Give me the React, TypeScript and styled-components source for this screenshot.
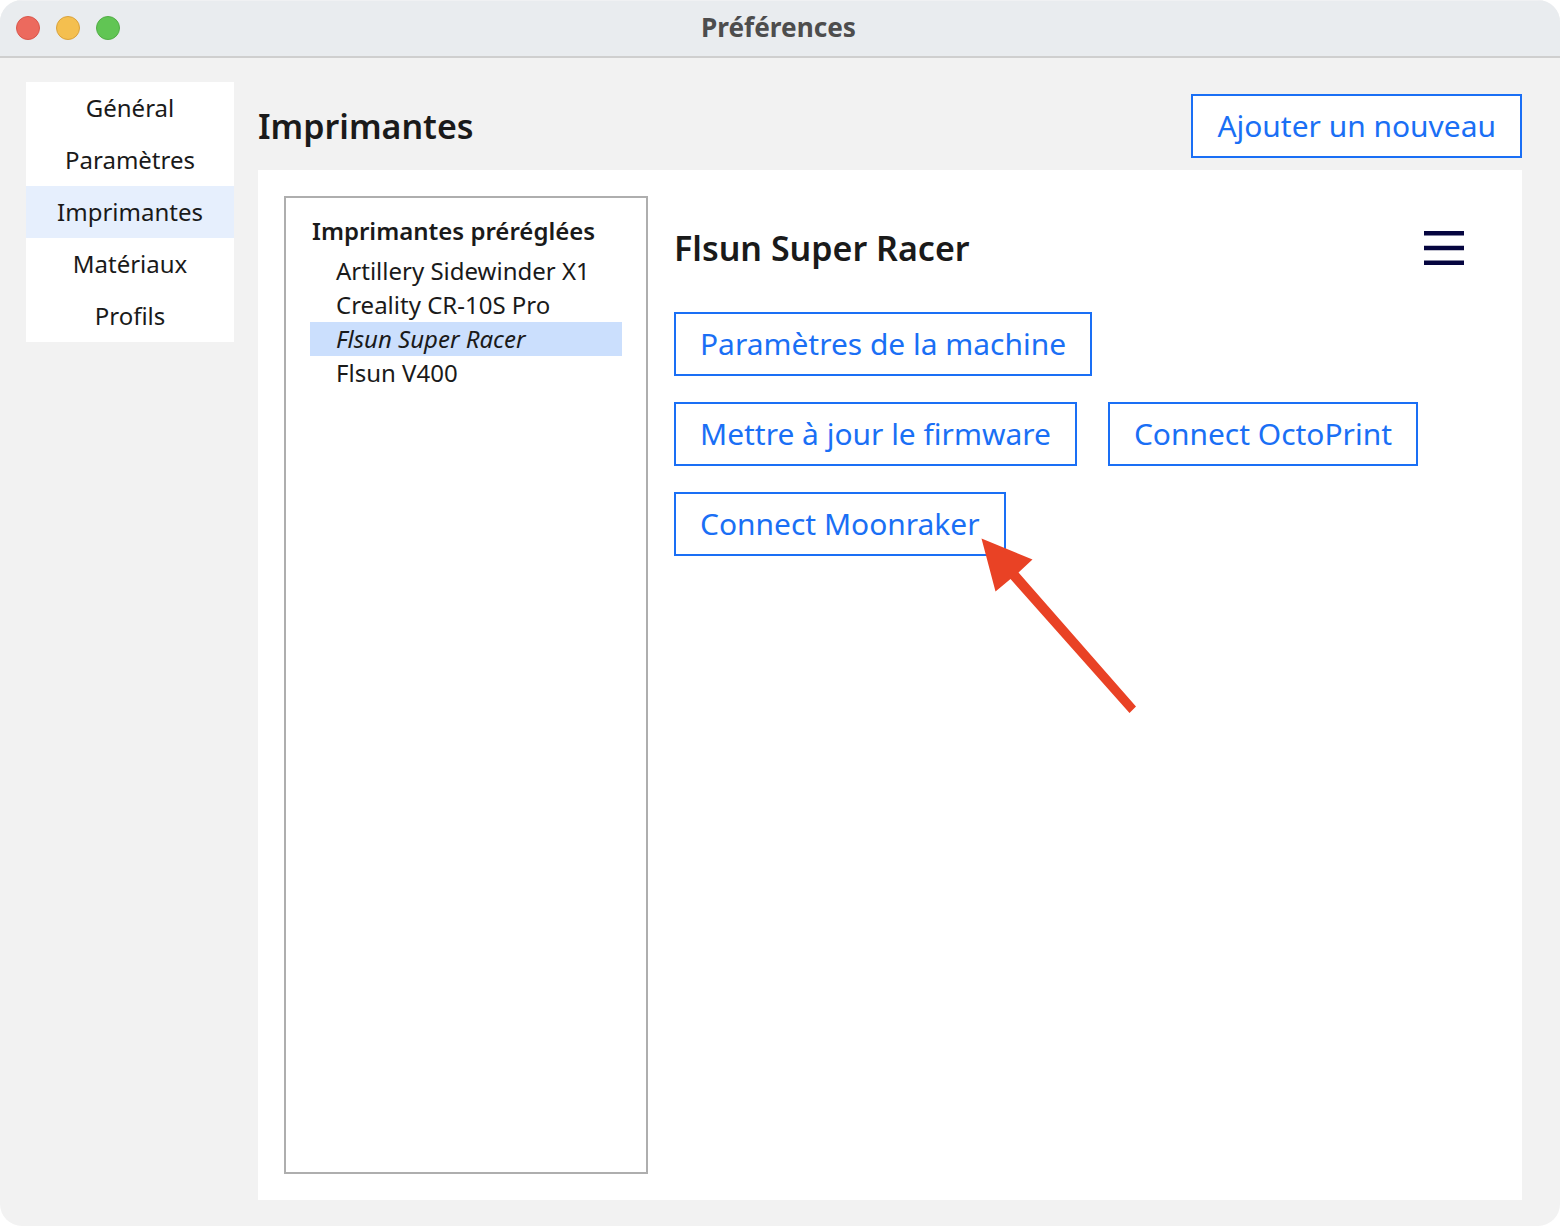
import React from "react";
import styled, { createGlobalStyle } from "styled-components";

const GlobalStyle = createGlobalStyle`
  html, body {
    margin: 0;
    padding: 0;
    background: #ffffff;
  }
  * {
    box-sizing: border-box;
  }
`;

const Window = styled.div`
  position: relative;
  width: 1560px;
  height: 1226px;
  display: flex;
  flex-direction: column;
  border-radius: 22px;
  overflow: hidden;
  background: #f2f2f2;
  font-family: "Noto Sans", sans-serif;
  color: #1a1a1a;
`;

const TitleBar = styled.header`
  position: relative;
  height: 58px;
  flex: none;
  display: flex;
  align-items: center;
  justify-content: center;
  padding: 0 3px 4px 0;
  background: #e9ecef;
  border-top: 1px solid #f0f1f3;
  border-bottom: 2px solid #cfcfcf;
`;

const Lights = styled.div`
  position: absolute;
  left: 16px;
  top: 15px;
  display: flex;
  gap: 16px;
`;

const Light = styled.span<{ $fill: string; $edge: string }>`
  width: 24px;
  height: 24px;
  border-radius: 50%;
  background: ${(p) => p.$fill};
  border: 1px solid ${(p) => p.$edge};
`;

const WindowTitle = styled.div`
  font-size: 26.2px;
  font-weight: 700;
  color: #4d4d4d;
`;

const Body = styled.div`
  flex: 1;
  display: flex;
  gap: 24px;
  padding: 24px 38px 26px 26px;
  min-height: 0;
`;

const Sidebar = styled.nav`
  width: 208px;
  height: 260px;
  flex: none;
  background: #ffffff;
`;

const NavItem = styled.div<{ $active?: boolean }>`
  height: 52px;
  padding-bottom: 2px;
  display: flex;
  align-items: center;
  justify-content: center;
  font-size: 24px;
  color: #1a1a1a;
  background: ${(p) => (p.$active ? "#e6effd" : "transparent")};
`;

const Main = styled.main`
  flex: 1;
  display: flex;
  flex-direction: column;
  gap: 12px;
  min-width: 0;
`;

const MainHeader = styled.div`
  height: 76px;
  flex: none;
  display: flex;
  align-items: flex-end;
  justify-content: space-between;
`;

const PageTitle = styled.h1`
  margin: 0 0 9px;
  font-size: 34px;
  line-height: 46px;
  font-weight: 600;
  color: #1a1a1a;
`;

const OutlineButton = styled.button`
  height: 64px;
  padding: 0 24px 2px;
  flex: none;
  font-family: inherit;
  font-size: 29.95px;
  color: #1a6ff5;
  background: #ffffff;
  border: 2px solid #1a6ff5;
  border-radius: 0;
`;

const Panel = styled.section`
  flex: 1;
  display: flex;
  gap: 26px;
  padding: 26px;
  background: #ffffff;
  min-height: 0;
`;

const ListBox = styled.div`
  width: 364px;
  flex: none;
  padding: 14px 24px;
  border: 2px solid #aeaeae;
`;

const ListHeading = styled.div`
  height: 42px;
  padding: 0 0 6px 2px;
  display: flex;
  align-items: center;
  font-size: 24px;
  font-weight: 600;
  color: #1a1a1a;
`;

const ListItem = styled.div<{ $selected?: boolean }>`
  height: 34px;
  padding: 0 0 2px 26px;
  display: flex;
  align-items: center;
  font-size: 24px;
  font-style: ${(p) => (p.$selected ? "italic" : "normal")};
  background: ${(p) => (p.$selected ? "#cbdffd" : "transparent")};
`;

const Detail = styled.div`
  flex: 1;
  min-width: 0;
  padding-top: 24px;
`;

const DetailHeader = styled.div`
  height: 56px;
  padding-right: 32px;
  display: flex;
  align-items: center;
  justify-content: space-between;
`;

const DetailTitle = styled.h2`
  margin: 0;
  font-size: 34px;
  font-weight: 600;
  color: #1a1a1a;
`;

const Actions = styled.div`
  margin-top: 36px;
  display: flex;
  flex-direction: column;
  gap: 26px;
`;

const ActionRow = styled.div`
  display: flex;
  gap: 31px;
`;

const Arrow = styled.svg`
  position: absolute;
  left: 0;
  top: 0;
  pointer-events: none;
`;

function MenuIcon() {
  return (
    <svg width="40" height="36" viewBox="0 0 40 36">
      <rect x="0" y="1" width="40" height="4.5" fill="#05053f" />
      <rect x="0" y="15.75" width="40" height="4.5" fill="#05053f" />
      <rect x="0" y="30.5" width="40" height="4.5" fill="#05053f" />
    </svg>
  );
}

const navItems = ["Général", "Paramètres", "Imprimantes", "Matériaux", "Profils"];
const printers = ["Artillery Sidewinder X1", "Creality CR-10S Pro", "Flsun Super Racer", "Flsun V400"];

function App() {
  return (
    <Window>
      <GlobalStyle />
      <TitleBar>
        <Lights>
          <Light $fill="#ec6a5e" $edge="#d9574c" />
          <Light $fill="#f4bf4f" $edge="#d9a23c" />
          <Light $fill="#61c554" $edge="#52ad46" />
        </Lights>
        <WindowTitle>Préférences</WindowTitle>
      </TitleBar>
      <Body>
        <Sidebar>
          {navItems.map((item) => (
            <NavItem key={item} $active={item === "Imprimantes"}>
              {item}
            </NavItem>
          ))}
        </Sidebar>
        <Main>
          <MainHeader>
            <PageTitle>Imprimantes</PageTitle>
            <OutlineButton>Ajouter un nouveau</OutlineButton>
          </MainHeader>
          <Panel>
            <ListBox>
              <ListHeading>Imprimantes préréglées</ListHeading>
              {printers.map((printer) => (
                <ListItem key={printer} $selected={printer === "Flsun Super Racer"}>
                  {printer}
                </ListItem>
              ))}
            </ListBox>
            <Detail>
              <DetailHeader>
                <DetailTitle>Flsun Super Racer</DetailTitle>
                <MenuIcon />
              </DetailHeader>
              <Actions>
                <ActionRow>
                  <OutlineButton>Paramètres de la machine</OutlineButton>
                </ActionRow>
                <ActionRow>
                  <OutlineButton>Mettre à jour le firmware</OutlineButton>
                  <OutlineButton>Connect OctoPrint</OutlineButton>
                </ActionRow>
                <ActionRow>
                  <OutlineButton>Connect Moonraker</OutlineButton>
                </ActionRow>
              </Actions>
            </Detail>
          </Panel>
        </Main>
      </Body>
      <Arrow width="1560" height="1226" viewBox="0 0 1560 1226">
        <path
          d="M981.5 538.5 L1032.5 559.5 L1018.5 572.5 L1136 706.5 L1129.5 713 L1010.5 579 L995.5 591.5 Z"
          fill="#e94225"
        />
      </Arrow>
    </Window>
  );
}

export default App;
